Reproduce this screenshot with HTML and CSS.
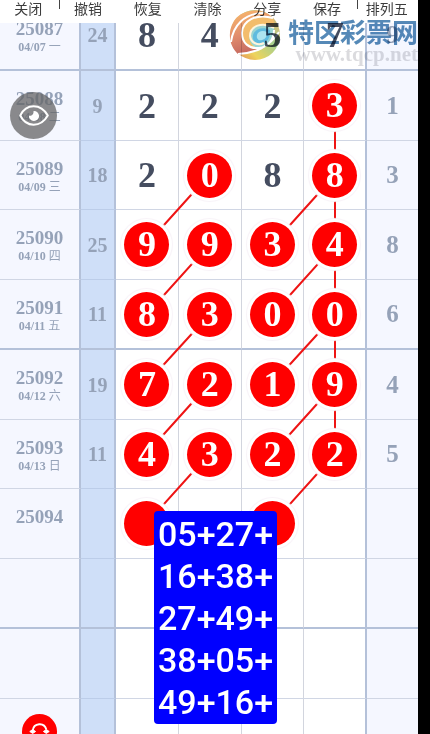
FILE: index.html
```html
<!DOCTYPE html>
<html lang="zh-CN">
<head>
<meta charset="utf-8">
<meta name="viewport" content="width=device-width, initial-scale=1">
<title>排列五</title>
<link rel="stylesheet" href="styles.css">
</head>
<body>
<div class="app">
  <nav class="toolbar">
    <button class="tool tool-split">关闭</button>
    <button class="tool">撤销</button>
    <button class="tool">恢复</button>
    <button class="tool">清除</button>
    <button class="tool">分享</button>
    <button class="tool tool-split">保存</button>
    <button class="tool">排列五</button>
  </nav>

  <main class="board">
    <table class="trend">
      <colgroup>
        <col class="col-issue"><col class="col-sum"><col><col><col><col><col class="col-last">
      </colgroup>
      <tbody>
        <tr class="heavy"><th><b>25087</b><small>04/07 <span>一</span></small></th><td class="sum">24</td><td>8</td><td>4</td><td>5</td><td class="edge">7</td><td class="last">9</td></tr>
        <tr><th><b>25088</b><small>04/08 <span>二</span></small></th><td class="sum">9</td><td>2</td><td>2</td><td>2</td><td class="edge"><span class="ball">3</span></td><td class="last">1</td></tr>
        <tr><th><b>25089</b><small>04/09 <span>三</span></small></th><td class="sum">18</td><td>2</td><td><span class="ball">0</span></td><td>8</td><td class="edge"><span class="ball">8</span></td><td class="last">3</td></tr>
        <tr><th><b>25090</b><small>04/10 <span>四</span></small></th><td class="sum">25</td><td><span class="ball">9</span></td><td><span class="ball">9</span></td><td><span class="ball">3</span></td><td class="edge"><span class="ball">4</span></td><td class="last">8</td></tr>
        <tr class="heavy"><th><b>25091</b><small>04/11 <span>五</span></small></th><td class="sum">11</td><td><span class="ball">8</span></td><td><span class="ball">3</span></td><td><span class="ball">0</span></td><td class="edge"><span class="ball">0</span></td><td class="last">6</td></tr>
        <tr><th><b>25092</b><small>04/12 <span>六</span></small></th><td class="sum">19</td><td><span class="ball">7</span></td><td><span class="ball">2</span></td><td><span class="ball">1</span></td><td class="edge"><span class="ball">9</span></td><td class="last">4</td></tr>
        <tr><th><b>25093</b><small>04/13 <span>日</span></small></th><td class="sum">11</td><td><span class="ball">4</span></td><td><span class="ball">3</span></td><td><span class="ball">2</span></td><td class="edge"><span class="ball">2</span></td><td class="last">5</td></tr>
        <tr><th><b>25094</b><small></small></th><td class="sum"></td><td><span class="ball"></span></td><td></td><td><span class="ball"></span></td><td class="edge"></td><td class="last"></td></tr>
        <tr class="heavy"><th></th><td class="sum"></td><td></td><td></td><td></td><td class="edge"></td><td class="last"></td></tr>
        <tr><th></th><td class="sum"></td><td></td><td></td><td></td><td class="edge"></td><td class="last"></td></tr>
        <tr><th></th><td class="sum"></td><td></td><td></td><td></td><td class="edge"></td><td class="last"></td></tr>
      </tbody>
    </table>

    <svg class="links" viewBox="0 0 251 698" preserveAspectRatio="none" aria-hidden="true">
      <path d="M219 104V453
        M93 174L30 244 M93 244L30 314 M93 314L30 383 M93 383L30 453 M93 453L30 523
        M219 174L156 244 M219 244L156 314 M219 314L156 383 M219 383L156 453 M219 453L156 523"/>
    </svg>

    <div class="watermark">
      <svg class="mark-logo" viewBox="0 0 54 54" aria-hidden="true">
        <defs>
          <linearGradient id="rim" x1=".3" y1="0" x2=".6" y2="1">
            <stop offset="0" stop-color="#f6ad5c"/><stop offset=".5" stop-color="#dd7f5c"/><stop offset="1" stop-color="#b9504c"/>
          </linearGradient>
          <linearGradient id="base" x1="0" y1="1" x2="1" y2="0">
            <stop offset="0" stop-color="#d9604a"/><stop offset=".3" stop-color="#ecd04a"/><stop offset=".6" stop-color="#9ccb83"/><stop offset="1" stop-color="#f0a85a"/>
          </linearGradient>
        </defs>
        <circle cx="27" cy="27" r="25" fill="url(#base)"/>
        <path d="M44 9C33-1 14 1 6 13-1 24 1 39 11 47 22 44 30 43 36 40 20 42 12 33 14 23 17 12 30 6 44 9z" fill="url(#rim)"/>
        <path d="M44 9C30 6 17 12 14 23c-2 10 6 18 15 18-6-3-9-9-7-15 3-9 14-12 24-6 1-4 0-8-2-11z" fill="#f2b65c"/>
        <path d="M46 20c-10-6-21-3-24 6-2 7 2 13 9 14 9 0 16-8 15-20z" fill="#8ed0cf"/>
        <path d="M42 22c-8-4-15-1-17 5-1 6 3 10 9 9 6-2 9-8 8-14z" fill="#4fb4dc"/>
        <path d="M39 24c-4-2-9-1-10 3s2 6 5 5c4-1 5-4 5-8z" fill="#a5e0ee"/>
        <path d="M3 34C5 18 16 5 36 5M10 46C28 45 41 39 51 24M45 10C28 5 14 13 14 25c0 10 7 16 17 15 9-1 15-8 15-18" fill="none" stroke="#fff" stroke-width="2"/>
        <path d="M46 20C34 13 22 18 22 28c1 7 8 10 14 7" fill="none" stroke="#fff3d8" stroke-width="2"/>
      </svg>
      <div class="mark-text">
        <span class="mark-name">特区彩票网</span>
        <span class="mark-url">www.tqcp.net</span>
      </div>
    </div>

    <div class="picks">
      <span>05+27+</span>
      <span>16+38+</span>
      <span>27+49+</span>
      <span>38+05+</span>
      <span>49+16+</span>
    </div>
  </main>

  <button class="eye" aria-label="显示">
    <svg viewBox="0 0 46 46" aria-hidden="true">
      <path d="M10 23C16 11 30 11 37 23C30 35 16 35 10 23Z" fill="none" stroke="#fff" stroke-width="2" stroke-linejoin="round"/>
      <path d="M23 18.500a5 5 0 1 1-4.500 4.500c2 1 5-1 4.500-4.500z" fill="#fff"/>
    </svg>
  </button>
  <button class="refresh" aria-label="刷新">
    <svg viewBox="0 0 36 36" aria-hidden="true">
      <path d="M11 17C12 9 23 8 25 16M25 21C23 28 13 28 11 21" fill="none" stroke="#fff" stroke-width="2"/>
      <path d="M8 18l3-2 3 2-3 2zM22 18l3-2 3 2-3 2z" fill="#fff" stroke="#fff" stroke-linejoin="round"/>
    </svg>
  </button>
</div>
</body>
</html>
```
FILE: styles.css
```css
* { box-sizing: border-box; }

body {
  margin: 0;
  background: #000;
  font-family: "Liberation Serif", "Noto Sans CJK SC", serif;
}

button {
  margin: 0;
  padding: 0;
  border: 0;
  background: none;
  font: inherit;
  color: inherit;
}

.app {
  position: relative;
  height: 100vh;
  overflow: hidden;
  padding-right: 12px;
}

.toolbar {
  position: relative;
  z-index: 4;
  display: grid;
  grid-template-columns: repeat(7, 1fr);
  height: 23px;
  background: #fff;
  color: #3c3c3c;
  font-family: "Noto Sans CJK SC", sans-serif;
  font-size: 14px;
  line-height: 16px;
}

.tool {
  position: relative;
  padding-right: 3px;
  padding-bottom: 7px;
  white-space: nowrap;
}

.tool-split::after {
  content: "";
  position: absolute;
  top: 0;
  right: 0;
  width: 1px;
  height: 9px;
  background: #444;
}

/* The first row scrolls partly under the toolbar. */
.board {
  position: relative;
  margin-top: -22px;
  background: #fff;
}

.trend {
  width: 100%;
  table-layout: fixed;
  border-collapse: separate;
  border-spacing: 0;
}

.col-issue { width: 81px; }
.col-sum { width: 35px; }
.col-last { width: 51px; }

.trend tr { height: 70px; }
.trend tr:nth-child(4n + 3) { height: 69px; }

.trend th,
.trend td {
  padding: 0;
  border-right: 1px solid #d2d5de;
  border-bottom: 1px solid #d0d6e4;
  text-align: center;
  vertical-align: middle;
  font-size: 36px;
  line-height: 40px;
  font-weight: bold;
  color: #454d60;
}

.trend th {
  padding-top: 4px;
  border-right: 2px solid #b4c1d9;
  background: #f5f7ff;
  color: #95a2b8;
}

.trend th b,
.trend th small {
  display: block;
}

.trend th b {
  font-size: 19px;
  line-height: 19px;
}

.trend th small {
  height: 18px;
  font-size: 12px;
  line-height: 18px;
}

.trend th small span { font-weight: normal; }

.trend .sum {
  border-right: 2px solid #b4c1d9;
  border-bottom-color: #bccde9;
  background: #cfdff8;
  color: #95a2b8;
  font-size: 20px;
}

.trend .edge { border-right: 2px solid #b4c1d9; }

.trend .last {
  border-right: 0;
  background: #f5f7ff;
  color: #95a2b8;
  font-size: 25px;
}

.trend .heavy th,
.trend .heavy td {
  border-bottom: 2px solid #b4c1d9;
}

.ball {
  position: relative;
  z-index: 2;
  display: block;
  width: 45px;
  height: 45px;
  margin: 0 auto;
  border-radius: 50%;
  background: #f00;
  box-shadow: 0 0 0 3px #fff, 0 0 1px 4px #f8f3f8;
  color: #fff;
  line-height: 45px;
}

.links {
  position: absolute;
  z-index: 1;
  top: 0;
  left: 116px;
  width: calc(100% - 167px);
  height: 698px;
}

.links path {
  fill: none;
  stroke: #ee1414;
  stroke-width: 2;
}

.watermark {
  position: absolute;
  z-index: 5;
  top: 7px;
  right: 0;
  display: flex;
  gap: 6px;
  mix-blend-mode: multiply;
  pointer-events: none;
}

.mark-logo {
  width: 54px;
  height: 54px;
  opacity: .9;
}

.mark-text {
  display: flex;
  flex-direction: column;
  align-items: flex-end;
  padding-top: 8px;
}

.mark-name {
  font: bold 26px/30px "Noto Sans CJK SC", sans-serif;
  color: rgba(42, 108, 165, .8);
}

.mark-url {
  font-size: 21px;
  line-height: 16px;
  font-weight: bold;
  color: rgba(190, 190, 195, .55);
}

.picks {
  position: absolute;
  z-index: 3;
  top: 510px;
  left: 154px;
  display: flex;
  flex-direction: column;
  align-items: center;
  padding: 2px 4px 1px;
  border-radius: 4px;
  background: #00f;
  color: #fff;
  font-family: Roboto, sans-serif;
  font-size: 34px;
  font-weight: 500;
  line-height: 42px;
}

.eye {
  position: absolute;
  z-index: 3;
  top: 92px;
  left: 10px;
  width: 47px;
  height: 47px;
  border-radius: 50%;
  background: rgba(100, 100, 102, .75);
}

.refresh {
  position: absolute;
  z-index: 3;
  bottom: -15px;
  left: 22px;
  width: 35px;
  height: 35px;
  border-radius: 50%;
  background: #f00;
}

.eye svg,
.refresh svg {
  display: block;
  width: 100%;
  height: 100%;
}
```
